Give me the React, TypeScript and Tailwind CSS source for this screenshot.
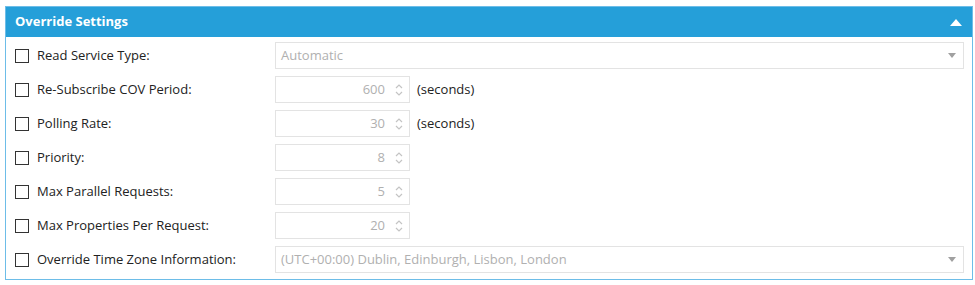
import React from "react";

const font = { fontFamily: '"Open Sans", "Noto Sans", sans-serif' };

function Checkbox() {
  return <div className="w-[14px] h-[14px] border border-[#333] bg-white shrink-0" />;
}

function Spinner() {
  return (
    <svg width="8" height="16" viewBox="0 0 8 16" className="shrink-0">
      <path d="M1 6 L4 3 L7 6" fill="none" stroke="#c4c4c4" strokeWidth="1.2" />
      <path d="M1 10 L4 13 L7 10" fill="none" stroke="#c4c4c4" strokeWidth="1.2" />
    </svg>
  );
}

function NumberInput({ value, unit }: { value: string; unit?: boolean }) {
  return (
    <div className="flex items-center">
      <div className="w-[135px] h-[27px] border border-[#e3e3e3] flex items-center justify-end pr-[6px] gap-[10px] bg-white">
        <span className="text-[#b0b0b0]">{value}</span>
        <Spinner />
      </div>
      {unit && <span className="ml-[7px] text-[#222]">(seconds)</span>}
    </div>
  );
}

function SelectInput({ value }: { value: string }) {
  return (
    <div className="flex-1 h-[27px] border border-[#e3e3e3] flex items-center justify-between pl-[5px] pr-[7px] bg-white">
      <span className="text-[#b0b0b0]">{value}</span>
      <svg width="8" height="5" viewBox="0 0 8 5">
        <path d="M0 0 L8 0 L4 5 Z" fill="#a0a0a0" />
      </svg>
    </div>
  );
}

function Row({ label, children }: { label: string; children: React.ReactNode }) {
  return (
    <div className="flex items-center h-[27px]">
      <div className="w-[260px] flex items-center gap-[8px] shrink-0">
        <Checkbox />
        <span className="text-[#222]">{label}</span>
      </div>
      {children}
    </div>
  );
}

export default function App() {
  return (
    <div className="w-[975px] h-[285px] bg-white pt-[6px] pl-[5px]" style={font}>
      <div className="w-[968px] h-[274px] border border-[#6dbde8] flex flex-col text-[13px]">
        <div className="h-[30px] bg-[#259fd9] flex items-center justify-between pl-[9px] pr-[10px] shrink-0">
          <span className="text-white font-bold text-[13px]">Override Settings</span>
          <svg width="12" height="7" viewBox="0 0 12 7">
            <path d="M0 7 L6 0 L12 7 Z" fill="#ffffff" />
          </svg>
        </div>
        <div className="flex flex-col gap-[7px] pt-[5px] pl-[9px] pr-[8px]">
          <Row label="Read Service Type:">
            <SelectInput value="Automatic" />
          </Row>
          <Row label="Re-Subscribe COV Period:">
            <NumberInput value="600" unit />
          </Row>
          <Row label="Polling Rate:">
            <NumberInput value="30" unit />
          </Row>
          <Row label="Priority:">
            <NumberInput value="8" />
          </Row>
          <Row label="Max Parallel Requests:">
            <NumberInput value="5" />
          </Row>
          <Row label="Max Properties Per Request:">
            <NumberInput value="20" />
          </Row>
          <Row label="Override Time Zone Information:">
            <SelectInput value="(UTC+00:00) Dublin, Edinburgh, Lisbon, London" />
          </Row>
        </div>
      </div>
    </div>
  );
}
